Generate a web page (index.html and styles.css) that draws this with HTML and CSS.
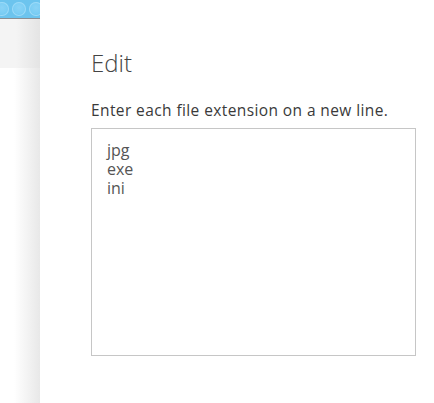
FILE: index.html
```html
<!DOCTYPE html>
<html lang="en">
<head>
  <meta charset="UTF-8" />
  <title>Edit extensions</title>
  <link rel="stylesheet" href="styles.css">
</head>
<body>

<div class="page">
  <aside class="backdrop">
    <div class="ribbon">
      <span class="dot"></span>
      <span class="dot"></span>
      <span class="dot"></span>
    </div>
    <div class="toolbar"></div>
    <div class="shade"></div>
  </aside>

  <main class="panel">
    <h1>Edit</h1>
    <label for="exts">Enter each file extension on a new line.</label>
    <textarea id="exts" spellcheck="false">jpg
exe
ini</textarea>
  </main>
</div>

</body>
</html>
```

FILE: styles.css
```css
:root {
  --text: #3a3a3a;
  --muted: #555555;
  --border: #c6c6c6;
  --sky: #6cc4ee;
}

* {
  box-sizing: border-box;
}

html, body {
  margin: 0;
  padding: 0;
  height: 100%;
  background: white;
}

body {
  font-family: 'Open Sans', 'Noto Sans', sans-serif;
  color: var(--text);
}

.page {
  display: flex;
  height: 100%;
}

.backdrop {
  width: 40px;
  flex: none;
  display: flex;
  flex-direction: column;
  background: linear-gradient(to right, #ffffff 0, #ffffff 14px, #e8e8e8 40px);
}

.ribbon {
  height: 19px;
  background: var(--sky);
  display: flex;
  gap: 3px;
  padding: 2px 0 0 0;
  margin-left: -5px;
  border-bottom: 1px solid #8a8f94;
  overflow: hidden;
}

.dot {
  width: 14px;
  height: 14px;
  flex: none;
  border-radius: 50%;
  background: radial-gradient(circle at 50% 40%, #8ad3f6 0, #7acdf4 55%, #5cb9e6 100%);
  box-shadow: inset 0 0 0 1px #9bdaf8;
}

.toolbar {
  height: 49px;
  background: linear-gradient(to right, #f4f4f4 0, #f4f4f4 16px, #e4e4e4 40px);
}

.shade {
  flex: 1;
}

.panel {
  flex: 1;
  padding: 48px 0 0 51px;
  display: flex;
  flex-direction: column;
}

.panel h1 {
  margin: 0;
  font-size: 24px;
  font-weight: 300;
  line-height: 30px;
  color: #444444;
}

.panel label {
  margin-top: 22px;
  font-size: 15.5px;
  letter-spacing: 0.4px;
  line-height: 20px;
  color: var(--text);
}

.panel textarea {
  margin-top: 8px;
  width: 325px;
  height: 228px;
  border: 1px solid var(--border);
  border-radius: 0;
  padding: 12px 15px;
  resize: none;
  outline: none;
  font-family: 'Open Sans', 'Noto Sans', sans-serif;
  font-size: 16px;
  line-height: 19px;
  color: var(--muted);
}
```
